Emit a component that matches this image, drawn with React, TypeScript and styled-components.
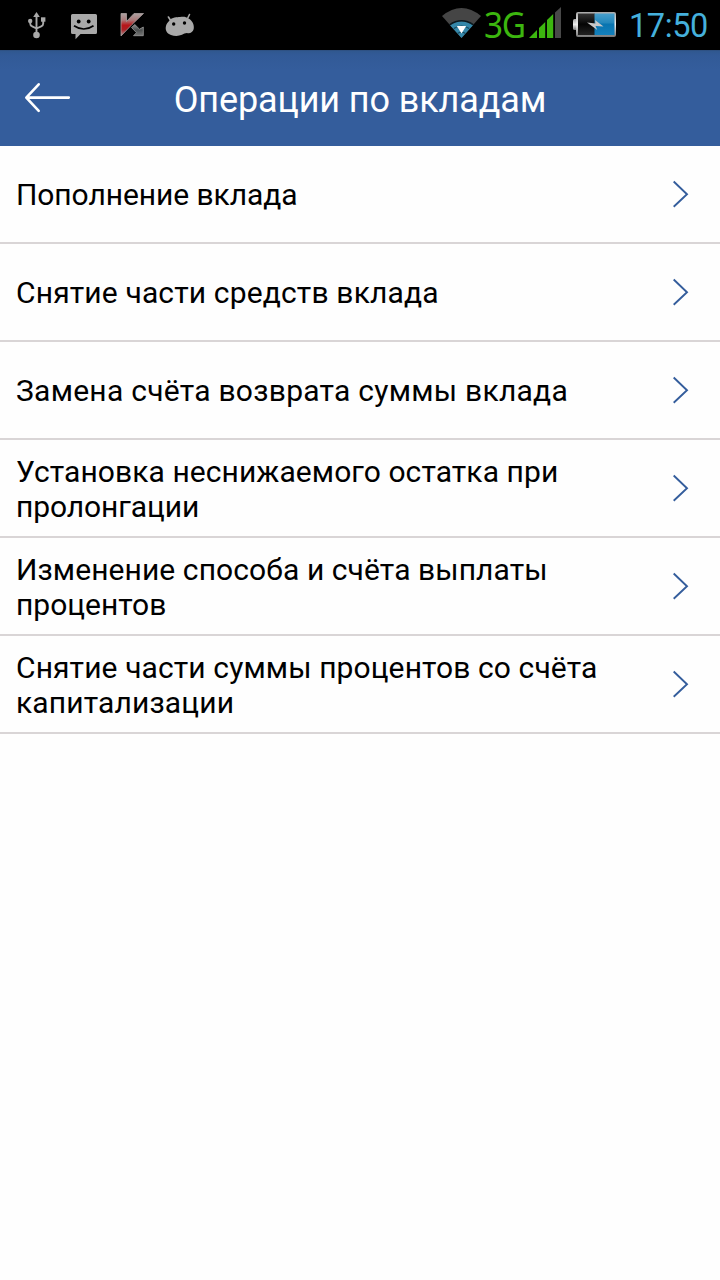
import React from 'react';
import styled, { createGlobalStyle } from 'styled-components';

const GlobalStyle = createGlobalStyle`
  *, *::before, *::after { box-sizing: border-box; }
  body { margin: 0; background: #fefefe; font-family: Roboto, "Liberation Sans", sans-serif; }
`;

const Screen = styled.div`
  display: flex;
  flex-direction: column;
  width: 720px;
  min-height: 1280px;
  background: #fefefe;
`;

const StatusBar = styled.div`
  display: flex;
  justify-content: space-between;
  height: 50px;
  padding: 0 12px 0 24px;
  background: #000;
`;

const StatusGroup = styled.div`
  display: flex;
  align-items: center;
`;

const Glyph = styled.svg<{ $gap?: number }>`
  display: block;
  flex: none;
  margin-right: ${({ $gap = 0 }) => $gap}px;
`;

const Network = styled.span`
  width: 45px;
  margin-left: 2px;
  color: #3cb60f;
  font: 400 37px/48px "Noto Sans", sans-serif;
  letter-spacing: -1.5px;
  padding-bottom: 2px;
  transform: scaleX(0.9);
  transform-origin: left center;
  white-space: nowrap;
`;

const Clock = styled.span`
  width: 79px;
  color: #45b0dc;
  font-size: 32.5px;
  letter-spacing: -0.4px;
  line-height: 50px;
  padding-top: 2px;
  white-space: nowrap;
`;

const Header = styled.header`
  display: grid;
  grid-template-columns: 100px 1fr 100px;
  align-items: center;
  height: 96px;
  background: linear-gradient(#2c4a78 0, #30588f 1px, #325a97 5px, #345d9c 20px);
`;

const BackButton = styled.button`
  width: 100px;
  height: 96px;
  padding: 0 0 0 24px;
  border: 0;
  background: none;
`;

const Title = styled.h1`
  margin: 0;
  padding-top: 4px;
  color: #fff;
  font-size: 36px;
  font-weight: 400;
  line-height: 42px;
  letter-spacing: -0.12px;
  text-align: center;
  white-space: nowrap;
`;

const List = styled.ul`
  margin: 0;
  padding: 0;
  list-style: none;
`;

const Row = styled.li`
  display: flex;
  align-items: center;
  justify-content: space-between;
  height: 98px;
  padding: 0 31px 0 16px;
  border-bottom: 2px solid #d9d5d6;
`;

const Label = styled.span`
  display: flex;
  flex-direction: column;
  padding-top: 1px;
  color: #000;
  font-size: 30px;
  line-height: 35px;
`;

const Line = styled.span<{ $tracking: number }>`
  letter-spacing: ${({ $tracking }) => $tracking}px;
  white-space: nowrap;
`;

type TextLine = { text: string; tracking: number };

const operations: TextLine[][] = [
  [{ text: 'Пополнение вклада', tracking: -0.07 }],
  [{ text: 'Снятие части средств вклада', tracking: 0.15 }],
  [{ text: 'Замена счёта возврата суммы вклада', tracking: 0.26 }],
  [
    { text: 'Установка неснижаемого остатка при', tracking: 0.08 },
    { text: 'пролонгации', tracking: -0.08 },
  ],
  [
    { text: 'Изменение способа и счёта выплаты', tracking: 0.09 },
    { text: 'процентов', tracking: 0 },
  ],
  [
    { text: 'Снятие части суммы процентов со счёта', tracking: 0.11 },
    { text: 'капитализации', tracking: 0.14 },
  ],
];

const UsbIcon = () => (
  <Glyph $gap={22} width="24" height="50" viewBox="24 0 24 50" fill="#a9a9a9">
    <path d="M36.5 12l3.3 5h-6.6z" />
    <path d="M36.5 16v17M30.2 21v2.5q0 2 2 2.8l4.3 2.2M43.2 20v3.5q0 2-2 2.8l-4.7 2.2" fill="none" stroke="#a9a9a9" strokeWidth="1.9" />
    <circle cx="36.5" cy="35" r="3.3" />
    <circle cx="30.2" cy="21" r="2.2" />
    <path d="M41 17.3h4.400v4.400H41z" />
  </Glyph>
);

const MessageIcon = () => (
  <Glyph $gap={22} width="28" height="50" viewBox="70 0 28 50">
    <path d="M72.500 14h23q1.500 0 1.500 1.500v17q0 1.500-1.500 1.500H80.500l-5 5.300V34h-3q-1.500 0-1.500-1.500v-17q0-1.500 1.500-1.500z" fill="#a9a9a9" />
    <circle cx="78.700" cy="21.500" r="1.900" />
    <circle cx="88.700" cy="21.500" r="1.900" />
    <path d="M74 25.700q9.800 6.600 19.500 0" fill="none" stroke="#000" strokeWidth="1.700" />
  </Glyph>
);

const AntivirusIcon = () => (
  <Glyph $gap={19} width="26" height="50" viewBox="120 0 26 50">
    <defs>
      <linearGradient id="red" x1="0" y1="0" x2="0" y2="1">
        <stop offset="0" stopColor="#aaa0a0" />
        <stop offset=".3" stopColor="#a77" />
        <stop offset=".52" stopColor="#b71519" />
        <stop offset=".72" stopColor="#a92025" />
        <stop offset="1" stopColor="#a79b9b" />
      </linearGradient>
      <linearGradient id="steel" x1="0" y1="0" x2="0" y2="1">
        <stop offset="0" stopColor="#8c8c8c" />
        <stop offset=".5" stopColor="#4c5050" />
        <stop offset="1" stopColor="#777" />
      </linearGradient>
    </defs>
    <path d="M121 13.500h5.500v8l7.500-8h9.500l-11.500 11L121 36z" fill="url(#red)" stroke="#aaa0a0" strokeWidth=".8" />
    <path d="M131.500 27.500l3.300-3 4.700 4.700 3.800-2.200v8.700h-9.800l3-3z" fill="url(#steel)" stroke="#999" strokeWidth=".8" />
  </Glyph>
);

const AndroidIcon = () => (
  <Glyph width="30" height="50" viewBox="165 0 30 50">
    <path d="M168.400 17l2.600 4M189.500 14.500l-2.500 5" stroke="#a9a9a9" strokeWidth="1.600" strokeLinecap="round" />
    <path d="M169.500 20.500C172 17 177 17.300 180 17C184 16.500 186 16.800 188.500 18.500C192.500 20.500 194.500 25 193.700 29C193 32.300 190 33.700 187 33C185 33.200 184 33.500 182 34.800C178 36.500 174 36 171 35C166.500 33.500 165 29.500 166 26C166.500 23.500 168 22 169.500 20.500z" fill="#a9a9a9" />
    <circle cx="173.700" cy="24" r="1.700" />
    <circle cx="184.500" cy="23" r="1.700" />
  </Glyph>
);

const WifiIcon = () => (
  <Glyph width="41" height="50" viewBox="441 0 41 50">
    <path d="M461.500 38L442 16Q461.500 0 481 16z" fill="#454545" />
    <path d="M461.500 38L450 25.200Q461.500 17.500 473 25.200z" fill="#3487a9" />
    <path d="M449.500 24.800q12-8 24 0" fill="none" stroke="#0b1a20" strokeWidth="1.600" />
    <path d="M453.800 28.500q7.700-5 15.400 0M457.500 33.500q4-2.500 8 0" fill="none" stroke="#16485d" strokeWidth="1.200" />
    <path d="M456.800 26h9.400l-4.700 7.500z" fill="#fff" />
  </Glyph>
);

const SignalIcon = () => (
  <Glyph $gap={11} width="33" height="50" viewBox="529 0 33 50" fill="#3cb60f">
    <path d="M529 38l8-8v8zM539 38V28l6.200-6v16zM547 38V20l6.200-6v24z" />
    <path d="M555 38V12.500l6-5.500v31z" fill="#484848" />
  </Glyph>
);

const BatteryIcon = () => (
  <Glyph $gap={12} width="44" height="50" viewBox="573 0 44 50">
    <defs>
      <linearGradient id="metal" x1="0" y1="0" x2="0" y2="1">
        <stop offset="0" stopColor="#a8a8a8" />
        <stop offset=".5" stopColor="#eee" />
        <stop offset="1" stopColor="#777" />
      </linearGradient>
      <linearGradient id="charge" x1="0" y1="0" x2="0" y2="1">
        <stop offset="0" stopColor="#489fcc" />
        <stop offset=".43" stopColor="#2387bb" />
        <stop offset=".5" stopColor="#0874b0" />
        <stop offset="1" stopColor="#1380bc" />
      </linearGradient>
      <linearGradient id="cell" x1="0" y1="0" x2="0" y2="1">
        <stop offset="0" stopColor="#333" />
        <stop offset=".5" stopColor="#050505" />
        <stop offset="1" stopColor="#222" />
      </linearGradient>
    </defs>
    <rect x="573" y="19" width="5" height="11" rx="1.500" fill="url(#metal)" />
    <rect x="576" y="12" width="40" height="25" rx="2" fill="url(#metal)" />
    <path d="M578 13.500h17v21.500h-17z" fill="url(#cell)" />
    <path d="M594.500 13.500h20v21.500h-20z" fill="url(#charge)" />
    <path d="M587 22.500l8.500 1-.5-3.500 8.500 6.500-8-.5 1.800 4z" fill="#c8c8c8" />
  </Glyph>
);

const BackArrow = () => (
  <Glyph width="48" height="32" viewBox="24 82 48 32" fill="none" stroke="#fff" strokeWidth="2.600" strokeLinecap="round" strokeLinejoin="round">
    <path d="M38.700 84.300L26.300 97.600l12.400 13.200M27 97.600h41.800" />
  </Glyph>
);

const Chevron = () => (
  <Glyph width="17" height="28" viewBox="672 180 17 28" fill="none" stroke="#345d9c" strokeWidth="1.900">
    <path d="M673.700 181.500l13.300 12.800-13.300 12.500" />
  </Glyph>
);

export default function App() {
  return (
    <>
      <GlobalStyle />
      <Screen>
        <StatusBar>
          <StatusGroup>
            <UsbIcon />
            <MessageIcon />
            <AntivirusIcon />
            <AndroidIcon />
          </StatusGroup>
          <StatusGroup>
            <WifiIcon />
            <Network>3G</Network>
            <SignalIcon />
            <BatteryIcon />
            <Clock>17:50</Clock>
          </StatusGroup>
        </StatusBar>
        <Header>
          <BackButton aria-label="Назад">
            <BackArrow />
          </BackButton>
          <Title>Операции по вкладам</Title>
        </Header>
        <List>
          {operations.map((lines) => (
            <Row key={lines[0].text}>
              <Label>
                {lines.map(({ text, tracking }) => (
                  <Line key={text} $tracking={tracking}>{text}</Line>
                ))}
              </Label>
              <Chevron />
            </Row>
          ))}
        </List>
      </Screen>
    </>
  );
}
